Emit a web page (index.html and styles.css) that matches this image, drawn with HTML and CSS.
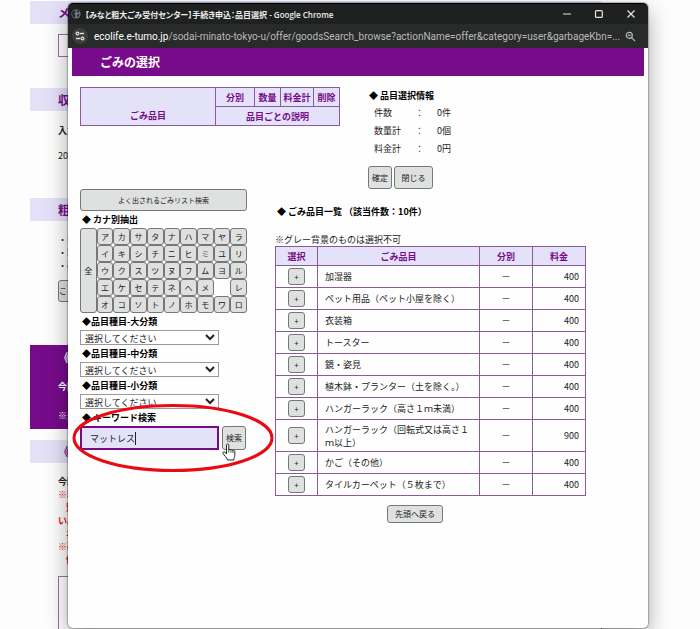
FILE: index.html
```html
<!DOCTYPE html>
<html lang="ja">
<head>
<meta charset="utf-8">
<title>【みなと粗大ごみ受付センター】手続き申込：品目選択</title>
<link rel="stylesheet" href="styles.css">
</head>
<body>
<div class="desktop">
  <main class="form-page">
    <h2 class="bar">メ</h2>
    <div class="outline-box"></div>
    <h2 class="bar">収集</h2>
    <p class="lead"><b>入力</b></p>
    <p class="lead-value">20</p>
    <h2 class="bar">粗大</h2>
    <ul class="notes"><li>・申</li><li>・粗</li><li>・確</li></ul>
    <button class="btn more-btn" type="button">こ</button>
    <section class="notice"><h3>《重</h3><p>今回</p><p>※最</p></section>
    <h2 class="bar bar-inset">《重</h2>
    <div class="warning">
      <p class="dark">今回</p><p>※粗</p><p class="indent">別</p><p>い。</p><p class="indent">ネ</p><p>※確</p><p class="indent">値</p>
    </div>
    <div class="outline-box tall"></div>
  </main>

  <div class="window">
    <header class="title-bar">
      <svg class="globe" viewBox="0 0 10 10"><circle cx="5" cy="5" r="4.600" fill="#777b7b"/><path d="M1 3l2-1.500 2 .5-.5 1.500-1.500 1L4.500 6 4 9 2 8 .8 5zM6 1l2.500 1.500L7 4 6 3zM6 5.500l2.500-.5-.5 2-1.500 1.500z" fill="#25292a"/></svg>
      <span class="window-title">【みなと粗大ごみ受付センター】手続き申込：品目選択 - Google Chrome</span>
      <svg class="controls" viewBox="0 0 74 10" fill="none" stroke="#e4e4e4" stroke-width="1.200"><path d="M1 5h8M65.500 1.500l7 7M72.500 1.500l-7 7"/><rect x="33.500" y="1.600" width="6.800" height="6.800" rx="1"/></svg>
    </header>
    <div class="url-bar">
      <svg class="site-icon" viewBox="0 0 16 16"><circle cx="8" cy="8" r="8" fill="#3c3d3d"/><g fill="none" stroke="#ddd" stroke-width="1.300"><circle cx="5.500" cy="5.500" r="1.400"/><path d="M8 5.500h4M4 10.500h4"/><circle cx="10.500" cy="10.500" r="1.400"/></g></svg>
      <span class="url"><b>ecolife.e-tumo.jp</b>/sodai-minato-tokyo-u/offer/goodsSearch_browse?actionName=offer&amp;category=user&amp;garbageKbn=...</span>
      <svg class="zoom-icon" viewBox="0 0 12 12" fill="none" stroke="#bbb" stroke-width="1.300"><circle cx="4.700" cy="4.700" r="3.300"/><path d="M7.200 7.200l3.800 3.800M3.200 4.700h3"/></svg>
    </div>
    <h1 class="page-title">ごみの選択</h1>

    <div class="content">
      <div class="summary-row">
        <table class="grid selected">
          <colgroup><col class="s-name"><col class="s-kind"><col class="s-count"><col class="s-fee"><col></colgroup>
          <thead>
            <tr><th rowspan="2" class="name-col">ごみ品目</th><th>分別</th><th>数量</th><th>料金計</th><th>削除</th></tr>
            <tr><th colspan="4">品目ごとの説明</th></tr>
          </thead>
        </table>
        <section class="info">
          <h2>◆ 品目選択情報</h2>
          <dl>
            <dt>件数</dt><dd>：</dd><dd>0件</dd>
            <dt>数量計</dt><dd>：</dd><dd>0個</dd>
            <dt>料金計</dt><dd>：</dd><dd>0円</dd>
          </dl>
          <div class="actions"><button class="btn confirm" type="button">確定</button><button class="btn close" type="button">閉じる</button></div>
        </section>
      </div>

      <div class="search-row">
        <form class="filters">
          <button class="btn list-btn" type="button">よく出されるごみリスト検索</button>
          <h2>◆ カナ別抽出</h2>
          <div class="kana">
            <button class="all" type="button">全</button>
            <button type="button">ア</button><button type="button">カ</button><button type="button">サ</button><button type="button">タ</button><button type="button">ナ</button><button type="button">ハ</button><button type="button">マ</button><button type="button">ヤ</button><button type="button">ラ</button>
            <button type="button">イ</button><button type="button">キ</button><button type="button">シ</button><button type="button">チ</button><button type="button">ニ</button><button type="button">ヒ</button><button type="button">ミ</button><button type="button">ユ</button><button type="button">リ</button>
            <button type="button">ウ</button><button type="button">ク</button><button type="button">ス</button><button type="button">ツ</button><button type="button">ヌ</button><button type="button">フ</button><button type="button">ム</button><button type="button">ヨ</button><button type="button">ル</button>
            <button type="button">エ</button><button type="button">ケ</button><button type="button">セ</button><button type="button">テ</button><button type="button">ネ</button><button type="button">ヘ</button><button type="button">メ</button><span></span><button type="button">レ</button>
            <button type="button">オ</button><button type="button">コ</button><button type="button">ソ</button><button type="button">ト</button><button type="button">ノ</button><button type="button">ホ</button><button type="button">モ</button><button type="button">ワ</button><button type="button">ロ</button>
          </div>
          <label for="large">◆品目種目-大分類</label>
          <select id="large"><option>選択してください</option></select>
          <label for="middle">◆品目種目-中分類</label>
          <select id="middle"><option>選択してください</option></select>
          <label for="small">◆品目種目-小分類</label>
          <select id="small"><option>選択してください</option></select>
          <label for="keyword">◆ キーワード検索</label>
          <div class="keyword-row">
            <input id="keyword" type="text" value="マットレス">
            <button class="btn search-btn" type="button">検索</button>
            <i class="caret"></i>
            <svg class="ring" viewBox="0 0 202 70"><ellipse cx="101" cy="35" rx="99" ry="32.500" fill="none" stroke="#ea0a12" stroke-width="3"/></svg>
            <svg class="hand" viewBox="0 0 14 18"><path d="M4.500 11V2.200c0-1.600 2.300-1.600 2.300 0V7c.3-1 2-.9 2.100.2.400-.8 1.900-.6 2 .5.500-.6 1.900-.4 1.900.8v4c0 1.500-1 2.300-1 4.500H5.500C5 14.500 2 12.500 1 10.200c-.5-1.300 1-1.900 2-.9z" fill="#fff" stroke="#222" stroke-width="1"/><path d="M6.800 7v2.500M8.900 7.500v2.200M10.900 8v2" stroke="#222" stroke-width=".8"/></svg>
          </div>
        </form>

        <section class="results">
          <h2>◆ ごみ品目一覧 （該当件数：10件）</h2>
          <p class="hint">※グレー背景のものは選択不可</p>
          <table class="grid items">
            <colgroup><col class="c-pick"><col><col class="c-kind"><col class="c-fee"></colgroup>
            <thead><tr><th>選択</th><th>ごみ品目</th><th>分別</th><th>料金</th></tr></thead>
            <tbody>
              <tr><td><button class="btn" type="button">+</button></td><td>加湿器</td><td>－</td><td>400</td></tr>
              <tr><td><button class="btn" type="button">+</button></td><td>ペット用品（ペット小屋を除く）</td><td>－</td><td>400</td></tr>
              <tr><td><button class="btn" type="button">+</button></td><td>衣装箱</td><td>－</td><td>400</td></tr>
              <tr><td><button class="btn" type="button">+</button></td><td>トースター</td><td>－</td><td>400</td></tr>
              <tr><td><button class="btn" type="button">+</button></td><td>鏡・姿見</td><td>－</td><td>400</td></tr>
              <tr><td><button class="btn" type="button">+</button></td><td>植木鉢・プランター（土を除く。）</td><td>－</td><td>400</td></tr>
              <tr><td><button class="btn" type="button">+</button></td><td>ハンガーラック（高さ１ｍ未満）</td><td>－</td><td>400</td></tr>
              <tr class="two-line"><td><button class="btn" type="button">+</button></td><td>ハンガーラック（回転式又は高さ１ｍ以上）</td><td>－</td><td>900</td></tr>
              <tr><td><button class="btn" type="button">+</button></td><td>かご（その他）</td><td>－</td><td>400</td></tr>
              <tr><td><button class="btn" type="button">+</button></td><td>タイルカーペット（５枚まで）</td><td>－</td><td>400</td></tr>
            </tbody>
          </table>
          <div class="results-footer"><button class="btn top-btn" type="button">先頭へ戻る</button></div>
        </section>
      </div>
    </div>
  </div>
</div>
</body>
</html>
```
FILE: styles.css
```css
* { box-sizing: border-box; }
body, h1, h2, h3, p, ul, dl, dd { margin: 0; padding: 0; }
body {
  background: #fdfdfd;
  color: #222;
  font: 9px/13px "Noto Sans CJK JP", sans-serif;
}
button, input, select { font: inherit; color: inherit; margin: 0; }
svg { display: block; flex: none; }

.desktop { position: relative; height: 100vh; min-height: 629px; overflow: hidden; }

/* Page behind the pop-up window */
.form-page { margin: 0 98px 0 30px; padding-top: 1px; }
.bar {
  padding-left: 28px;
  background: #e3e0f8;
  color: #760b8a;
  font-size: 12px;
  line-height: 23px;
}
.outline-box { height: 23px; margin: 10px 0 31px 28px; border: 1px solid #9c6bb0; background: #fff; }
.lead { margin: 13px 0 12px 28px; }
.lead-value { margin: 0 0 36px 28px; }
.notes { margin: 12px 0 8px 28px; list-style: none; }
.more-btn { display: block; width: 60px; height: 22px; margin-left: 28px; padding-left: 4px; text-align: left; }
.notice {
  margin: 43px 0 11px;
  padding: 5px 0 0 28px;
  height: 84px;
  background: #760b8a;
  color: #fff;
  font-weight: bold;
}
.notice h3 { font-size: 12px; line-height: 16px; margin-bottom: 14px; }
.notice p + p { margin-top: 16px; }
.warning { margin: 12px 0 10px 28px; color: #e02010; font-weight: bold; }
.warning .dark { color: #222; }
.warning .indent { padding-left: 8px; }
.outline-box.tall { height: 80px; margin: 0 0 0 28px; }

/* Pop-up browser window */
.window {
  position: absolute;
  inset: 3px 52px 1px 68px;
  border-radius: 5px;
  background: #fefefe;
  box-shadow: 0 0 1px 1px rgba(0, 0, 0, .25), 0 8px 22px rgba(0, 0, 0, .35);
}
.title-bar {
  display: flex;
  align-items: center;
  height: 21px;
  padding: 0 12px 0 3px;
  border-top: 1px solid #000;
  border-radius: 5px 5px 0 0;
  background: #1f2120;
  color: #eee;
}
.globe { width: 10px; height: 10px; }
.window-title { flex: 1; padding-left: 4px; font-family: "Open Sans", "Noto Sans CJK JP", sans-serif; font-size: 8px; font-weight: 600; font-feature-settings: "palt"; white-space: nowrap; }
.controls { width: 74px; height: 10px; }
.url-bar {
  display: flex;
  align-items: center;
  gap: 6px;
  height: 24px;
  padding: 0 12px 0 4px;
  background: #292a2a;
  color: #bbb;
  font-family: Roboto, sans-serif;
  font-size: 10px;
}
.url { flex: 1; min-width: 0; white-space: nowrap; }
.url b { color: #fff; font-weight: normal; }
.site-icon { width: 16px; height: 16px; }
.zoom-icon { width: 11px; height: 11px; }
.page-title {
  margin: 0 4px 11px;
  padding-left: 28px;
  background: #780b8b;
  color: #fff;
  font-size: 12px;
  line-height: 28px;
}

.content { padding: 0 62px 0 12px; }
.content h2 { font-size: 9px; font-weight: bold; line-height: 17px; color: #000; }

.btn, .kana button {
  border: 1px solid #777;
  border-radius: 3px;
  background: #dfe0e0;
  padding: 0;
  font-size: 8px;
  line-height: 12px;
}

.grid { border-collapse: collapse; }
.grid th, .grid td { border: 1px solid #8a5a9e; padding: 0; }
.grid th { background: #e4e2f8; color: #760b8a; font-weight: bold; }

.summary-row { display: grid; grid-template-columns: 260px 1fr; column-gap: 28px; align-items: start; }
.selected { width: 100%; table-layout: fixed; }
.selected th { height: 19px; }
.selected .name-col { vertical-align: bottom; padding-bottom: 3px; }
.s-name { width: 135px; }
.s-kind { width: 39px; }
.s-count { width: 26px; }
.s-fee { width: 33px; }
.info h2 { padding-left: 1px; }
.info dl {
  display: grid;
  grid-template-columns: 41px 22px 1fr;
  padding-left: 6px;
  line-height: 18px;
}
.actions { display: flex; gap: 2px; margin: 8px 0 0; }
.actions .btn { height: 23px; }
.confirm { width: 24px; }
.close { width: 39px; }

.search-row { display: grid; grid-template-columns: 167px 1fr; column-gap: 28px; align-items: start; }
.filters { display: flex; flex-direction: column; align-items: flex-start; }
.filters h2, .filters label { padding-left: 2px; }
.filters label { font-weight: bold; line-height: 17px; color: #000; }
.list-btn { width: 100%; height: 22px; font-size: 7px; }
.kana { display: grid; width: 100%; grid-template-columns: repeat(10, 1fr); grid-auto-rows: 17px; }
.kana .all { grid-row: span 5; }
.filters select {
  width: 139px;
  height: 15px;
  padding: 0;
  border: 1px solid #999;
  border-radius: 0;
  background-color: #fff;
}
.keyword-row { position: relative; display: flex; gap: 3px; }
.keyword-row input {
  width: 139px;
  height: 24px;
  padding: 0 8px;
  border: 2px solid #760b8a;
  border-radius: 0;
  background: #e4e2f8;
}
.search-btn { width: 24px; height: 24px; }
.caret { position: absolute; left: 55px; top: 6px; width: 1px; height: 13px; background: #222; }
.ring { position: absolute; left: -8px; top: -23px; width: 202px; height: 70px; pointer-events: none; }
.hand { position: absolute; left: 142px; top: 17px; width: 14px; height: 18px; }

.results { padding-top: 14px; }
.results h2 { padding-left: 2px; }
.hint { padding-top: 13px; }
.items { width: 100%; table-layout: fixed; }
.items th { height: 19px; }
.items td { height: 22px; }
.items .two-line td { height: 32px; }
.c-pick { width: 42px; }
.c-kind { width: 53px; }
.c-fee { width: 53px; }
.items td:nth-child(2) { padding: 0 7px; }
.items td:nth-child(odd) { text-align: center; }
.items td:last-child { text-align: right; padding-right: 6px; }
.items .btn { display: block; width: 17px; height: 17px; margin: 0 auto; }
.results-footer { display: flex; justify-content: center; padding: 9px 31px 0 0; }
.top-btn { width: 56px; height: 18px; }
```
